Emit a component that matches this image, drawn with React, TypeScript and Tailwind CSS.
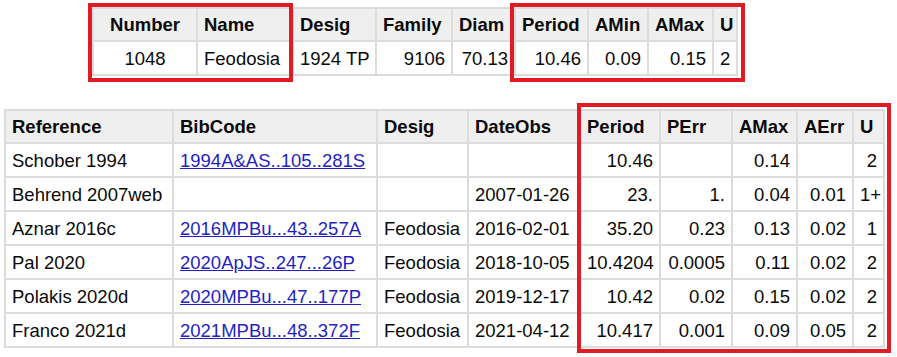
import React from "react";

const font = { fontFamily: '"Liberation Sans", Arial, sans-serif' };

type Col = { label: string; w: number; align: "left" | "right" | "center"; hc?: boolean };

const topCols: Col[] = [
  { label: "Number", w: 104, align: "center", hc: true },
  { label: "Name", w: 96, align: "left" },
  { label: "Desig", w: 83, align: "left" },
  { label: "Family", w: 76, align: "right" },
  { label: "Diam", w: 63, align: "right" },
  { label: "Period", w: 73, align: "right" },
  { label: "AMin", w: 60, align: "right" },
  { label: "AMax", w: 65, align: "right" },
  { label: "U", w: 24, align: "left" },
];

const topRow = ["1048", "Feodosia", "1924 TP", "9106", "70.13", "10.46", "0.09", "0.15", "2"];

const botCols: Col[] = [
  { label: "Reference", w: 168, align: "left" },
  { label: "BibCode", w: 204, align: "left" },
  { label: "Desig", w: 91, align: "left" },
  { label: "DateObs", w: 112, align: "left" },
  { label: "Period", w: 80, align: "right" },
  { label: "PErr", w: 72, align: "right" },
  { label: "AMax", w: 65, align: "right" },
  { label: "AErr", w: 56, align: "right" },
  { label: "U", w: 31, align: "right" },
];

const botRows: string[][] = [
  ["Schober 1994", "1994A&AS..105..281S", "", "", "10.46", "", "0.14", "", "2"],
  ["Behrend 2007web", "", "", "2007-01-26", "23.", "1.", "0.04", "0.01", "1+"],
  ["Aznar 2016c", "2016MPBu...43..257A", "Feodosia", "2016-02-01", "35.20", "0.23", "0.13", "0.02", "1"],
  ["Pal 2020", "2020ApJS..247...26P", "Feodosia", "2018-10-05", "10.4204", "0.0005", "0.11", "0.02", "2"],
  ["Polakis 2020d", "2020MPBu...47..177P", "Feodosia", "2019-12-17", "10.42", "0.02", "0.15", "0.02", "2"],
  ["Franco 2021d", "2021MPBu...48..372F", "Feodosia", "2021-04-12", "10.417", "0.001", "0.09", "0.05", "2"],
];

const alignClass = (a: string) =>
  a === "right" ? "text-right" : a === "center" ? "text-center" : "text-left";

function DataTable({ cols, rows, linkCol }: { cols: Col[]; rows: string[][]; linkCol?: number }) {
  const total = cols.reduce((s, c) => s + c.w, 0);
  return (
    <table
      className="table-fixed border-collapse text-[18.5px] leading-[21px] text-[#0a0a0a]"
      style={{ width: total }}
    >
      <colgroup>
        {cols.map((c, i) => (
          <col key={i} style={{ width: c.w }} />
        ))}
      </colgroup>
      <thead>
        <tr className="h-[33px]">
          {cols.map((c, i) => (
            <th
              key={i}
              className={`border-2 border-[#dcdcdc] bg-[#efefef] px-[6px] py-0 font-bold whitespace-nowrap ${
                c.hc ? "text-center" : "text-left"
              }`}
            >
              {c.label}
            </th>
          ))}
        </tr>
      </thead>
      <tbody>
        {rows.map((r, ri) => (
          <tr key={ri} className="h-[34px]">
            {r.map((v, ci) => (
              <td
                key={ci}
                className={`border-2 border-[#dcdcdc] bg-white px-[6px] py-0 whitespace-nowrap ${alignClass(
                  cols[ci].align
                )}`}
              >
                {linkCol === ci && v ? (
                  <a href="#" className="text-[#1f1fc4] underline">
                    {v}
                  </a>
                ) : (
                  v
                )}
              </td>
            ))}
          </tr>
        ))}
      </tbody>
    </table>
  );
}

export default function App() {
  return (
    <div className="relative w-[897px] h-[357px] bg-white overflow-hidden" style={font}>
      <div className="pt-[7px] pl-[92px]">
        <DataTable cols={topCols} rows={[topRow]} />
      </div>
      <div className="pt-[33px] pl-[4px]">
        <DataTable cols={botCols} rows={botRows} linkCol={1} />
      </div>

      {/* red highlight boxes */}
      <div className="absolute left-[88px] top-[3px] w-[205px] h-[79px] border-4 border-[#e01b24]" />
      <div className="absolute left-[510px] top-[3px] w-[235px] h-[79px] border-4 border-[#e01b24]" />
      <div className="absolute left-[577px] top-[103px] w-[314px] h-[250px] border-4 border-[#e01b24]" />
    </div>
  );
}
